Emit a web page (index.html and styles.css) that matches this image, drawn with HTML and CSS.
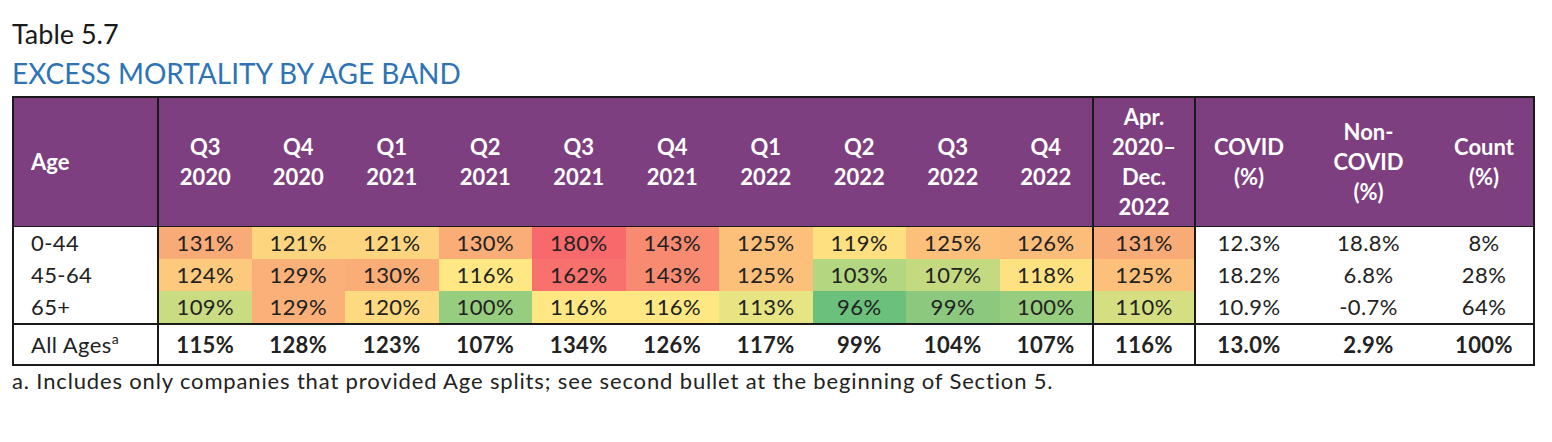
FILE: index.html
```html
<!DOCTYPE html>
<html lang="en">
<head>
<meta charset="utf-8">
<title>Table 5.7 Excess Mortality by Age Band</title>
<link rel="stylesheet" href="styles.css">
</head>
<body>
<div class="page">
  <div class="caption">Table 5.7</div>
  <div class="title">EXCESS MORTALITY BY AGE BAND</div>
  <table class="mort">
    <colgroup>
      <col class="c-age">
      <col class="c-q"><col class="c-q"><col class="c-q"><col class="c-q"><col class="c-q">
      <col class="c-q"><col class="c-q"><col class="c-q"><col class="c-q"><col class="c-q">
      <col class="c-tot">
      <col class="c-covid">
      <col class="c-non">
      <col class="c-count">
    </colgroup>
    <thead>
      <tr>
        <th class="age sep-r">Age</th>
        <th>Q3<br>2020</th>
        <th>Q4<br>2020</th>
        <th>Q1<br>2021</th>
        <th>Q2<br>2021</th>
        <th>Q3<br>2021</th>
        <th>Q4<br>2021</th>
        <th>Q1<br>2022</th>
        <th>Q2<br>2022</th>
        <th>Q3<br>2022</th>
        <th class="sep-r">Q4<br>2022</th>
        <th class="sep-r">Apr.<br>2020–<br>Dec.<br>2022</th>
        <th>COVID<br>(%)</th>
        <th>Non-<br>COVID<br>(%)</th>
        <th>Count<br>(%)</th>
      </tr>
    </thead>
    <tbody>
      <tr class="first">
        <td class="age sep-r">0-44</td>
        <td style="background:#f9ab77">131%</td>
        <td style="background:#fdd57f">121%</td>
        <td style="background:#fdd57f">121%</td>
        <td style="background:#faad77">130%</td>
        <td style="background:#f8696b">180%</td>
        <td style="background:#f98a72">143%</td>
        <td style="background:#fcc07b">125%</td>
        <td style="background:#fee081">119%</td>
        <td style="background:#fcc07b">125%</td>
        <td class="sep-r" style="background:#fcbc7a">126%</td>
        <td class="sep-r" style="background:#f9ab77">131%</td>
        <td>12.3%</td>
        <td>18.8%</td>
        <td>8%</td>
      </tr>
      <tr>
        <td class="age sep-r">45-64</td>
        <td style="background:#fcc97d">124%</td>
        <td style="background:#fab078">129%</td>
        <td style="background:#faad77">130%</td>
        <td style="background:#ffe883">116%</td>
        <td style="background:#f8716d">162%</td>
        <td style="background:#f98a72">143%</td>
        <td style="background:#fcc07b">125%</td>
        <td style="background:#b3d680">103%</td>
        <td style="background:#c4da81">107%</td>
        <td class="sep-r" style="background:#fee282">118%</td>
        <td class="sep-r" style="background:#fcc07b">125%</td>
        <td>18.2%</td>
        <td>6.8%</td>
        <td>28%</td>
      </tr>
      <tr>
        <td class="age sep-r">65+</td>
        <td style="background:#cadc81">109%</td>
        <td style="background:#fab078">129%</td>
        <td style="background:#fdd980">120%</td>
        <td style="background:#97cd7e">100%</td>
        <td style="background:#ffe883">116%</td>
        <td style="background:#ffe883">116%</td>
        <td style="background:#e6e483">113%</td>
        <td style="background:#6bc07c">96%</td>
        <td style="background:#8cc97e">99%</td>
        <td class="sep-r" style="background:#97cd7e">100%</td>
        <td class="sep-r" style="background:#d5df82">110%</td>
        <td>10.9%</td>
        <td>-0.7%</td>
        <td>64%</td>
      </tr>
      <tr class="total">
        <td class="age sep-r">All Ages<sup>a</sup></td>
        <td>115%</td>
        <td>128%</td>
        <td>123%</td>
        <td>107%</td>
        <td>134%</td>
        <td>126%</td>
        <td>117%</td>
        <td>99%</td>
        <td>104%</td>
        <td class="sep-r">107%</td>
        <td class="sep-r">116%</td>
        <td>13.0%</td>
        <td>2.9%</td>
        <td>100%</td>
      </tr>
    </tbody>
  </table>
  <p class="note">a. Includes only companies that provided Age splits; see second bullet at the beginning of Section 5.</p>
</div>
</body>
</html>
```

FILE: styles.css
```css
html, body {
  margin: 0;
  padding: 0;
  background: #ffffff;
}

.page {
  padding: 16px 0 0 12px;
  font-family: Lato, "Liberation Sans", sans-serif;
  color: #1c1c1c;
}

.caption {
  font-size: 27px;
  line-height: 36px;
  color: #1a1a1a;
}

.title {
  font-size: 28px;
  line-height: 38px;
  color: #2e74b5;
  margin-top: 2px;
  margin-bottom: 4px;
}

.mort {
  border-collapse: collapse;
  table-layout: fixed;
  width: 1521px;
  border: 2px solid #1a1a1a;
  font-size: 22px;
}

.c-age { width: 145px; }
.c-q { width: 93.5px; }
.c-tot { width: 102px; }
.c-covid { width: 107px; }
.c-non { width: 133px; }
.c-count { width: 99px; }

.mort th {
  background: #7e3f80;
  color: #ffffff;
  font-weight: 700;
  line-height: 30px;
  height: 128px;
  padding: 0;
  text-align: center;
  vertical-align: middle;
  border-bottom: 1px solid #1a1a1a;
}

.mort th.age {
  text-align: left;
  padding-left: 17px;
}

.mort td {
  height: 32px;
  padding: 0;
  text-align: center;
  vertical-align: middle;
  line-height: 32px;
  color: #222222;
  letter-spacing: 0.4px;
}

.mort td.age {
  text-align: left;
  padding-left: 17px;
}

.mort .sep-r {
  border-right: 2px solid #1a1a1a;
}

.mort tr.total td {
  height: 39px;
  font-weight: 700;
  border-top: 2px solid #1a1a1a;
}

.mort tr.total td.age {
  font-weight: 400;
}

.mort sup {
  font-size: 14px;
  line-height: 0;
  vertical-align: 9px;
}

.note {
  margin: 2px 0 0 0;
  font-size: 22px;
  line-height: 26px;
  letter-spacing: 0.85px;
  color: #222222;
}
```
